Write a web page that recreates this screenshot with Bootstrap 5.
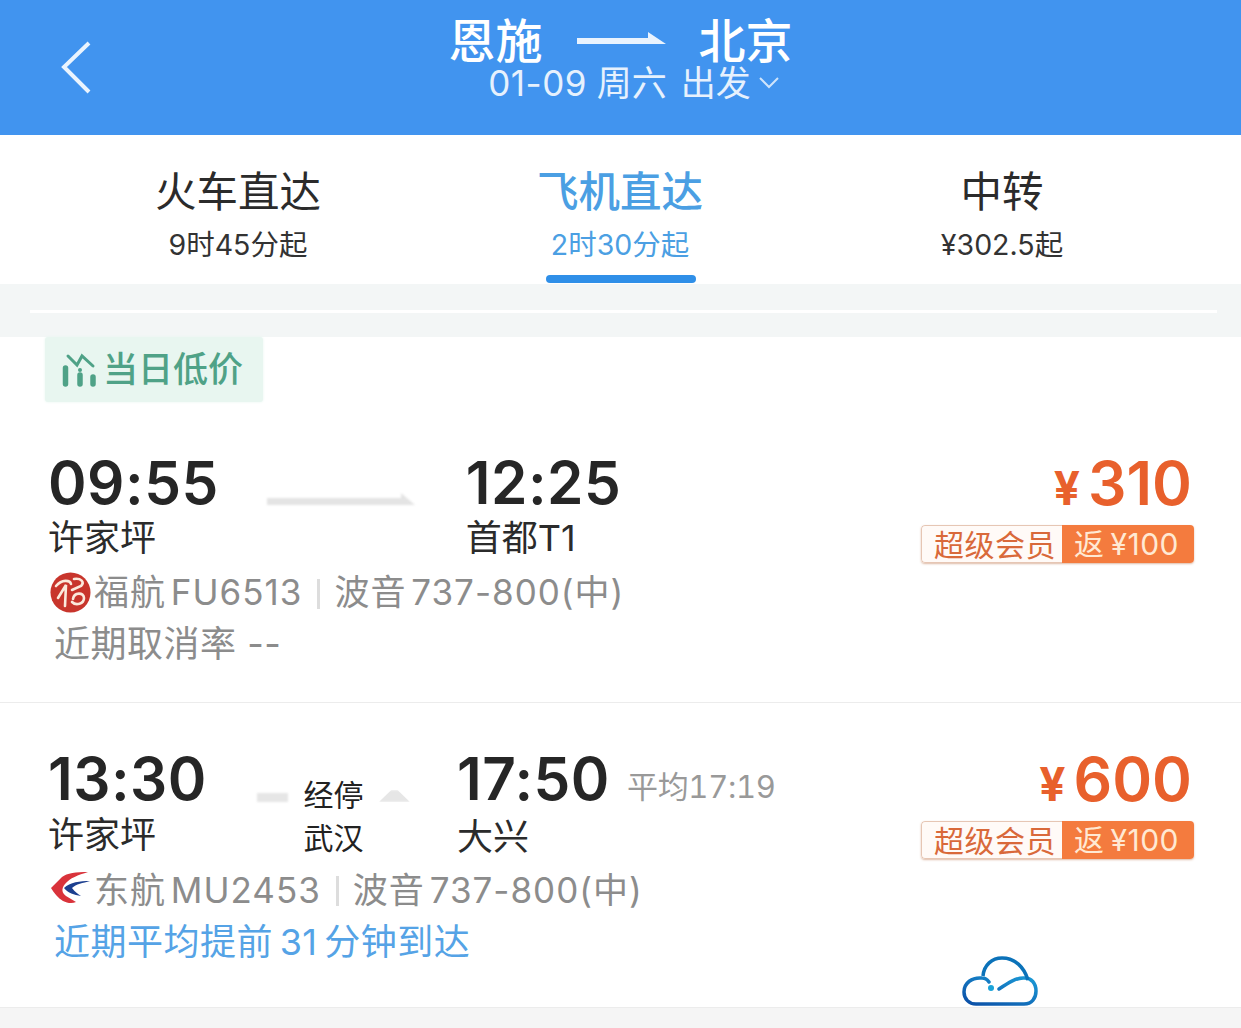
<!DOCTYPE html>
<html lang="zh-CN">
<head>
  <meta charset="UTF-8">
  <title>恩施 - 北京</title>
  <meta name="viewport" content="width=device-width, initial-scale=1">
  <link href="https://cdn.jsdelivr.net/npm/bootstrap@5.3.0/dist/css/bootstrap.min.css" rel="stylesheet">
  <style>
    body {
      background: #fff;
      font-family: "Inter", "Noto Sans CJK SC", sans-serif;
      color: #222;
      overflow: hidden;
    }
    .top-bar { height: 135px; background: #4194ef; color: #fff; }
    .back-icon { left: 60px; top: 41px; }
    .route-line { height: 66px; padding-top: 16px; font-size: 47px; font-weight: 500; line-height: 50px; gap: 33px; }
    .route-arrow { margin-top: 13px; margin-right: -2px; }
    .route-date { font-size: 35px; line-height: 34px; color: #e6f1fd; padding-left: 26px; }
    .route-date .digits { letter-spacing: .5px; }
    .route-date .day-text { margin-right: 4px; }
    .tab-row { height: 149px; padding: 0 47px; }
    .tab-item { width: 382px; padding-top: 30px; color: #2b2b2b; }
    .tab-title { font-size: 41.500px; line-height: 54px; }
    .tab-sub { font-size: 28.500px; line-height: 36px; margin-top: 8px; color: #333; }
    .tab-on, .tab-on .tab-sub { color: #4b9fe3; }
    .tab-on .tab-title { font-weight: 500; }
    .tab-mark { left: 50%; margin-left: -74px; bottom: 1px; width: 150px; height: 8px; border-radius: 4px; background: #2f8fe8; }
    .gap-band { height: 53px; background: #f3f6f6; padding: 26px 24px 0 30px; }
    .gap-line { height: 3px; background: #fff; }
    .low-tag { margin-left: 45px; width: 218px; height: 65px; background: #e8f6f0; color: #4fa287; font-size: 35px; font-weight: 500; border-radius: 3px; padding-left: 17px; gap: 5px; box-shadow: 0 0 3px #e8f6f0; }
    .flight-row { height: 301px; padding: 51px 47px 0 48px; border-bottom: 1px solid #ececec; }
    .flight-last { height: 305px; padding-top: 46px; }
    .flight-last .air-text { line-height: 53px; margin-bottom: 0; }
    .time-text { font-size: 58.500px; font-weight: 600; line-height: 60px; color: #262626; letter-spacing: .5px; }
    .air-text { font-size: 36px; line-height: 51px; margin-bottom: 2px; color: #2b2b2b; }
    .mid-col { width: 150px; margin: 0 51px 0 46px; height: 60px; }
    .mid-arrow { display: block; margin-top: 39px; filter: blur(1px); }
    .stop-col { width: 153px; margin: 0 47px 0 50px; height: 100px; }
    .stop-text { font-size: 30px; line-height: 43px; margin-top: 25px; }
    .stop-stub { width: 31px; height: 9px; background: #e6e6e6; margin-top: 44px; filter: blur(1px); }
    .stub-hat { height: 12px; margin-top: 41px; clip-path: polygon(0 100%, 40% 0, 60% 0, 100% 100%); }
    .avg-text { font-size: 31px; color: #999; margin-left: 17px; padding-top: 15px; letter-spacing: -.3px; font-variant-numeric: tabular-nums; }
    .info-line { font-size: 35px; line-height: 52px; color: #8c8c8c; gap: 3px; letter-spacing: 1px; word-spacing: -6px; padding-left: 2px; }
    .info-sep { width: 3px; height: 30px; background: #ddd; margin: 3px 11px 0 12px; }
    .info-note { font-size: 36px; line-height: 52px; color: #8c8c8c; padding-left: 6px; letter-spacing: .5px; word-spacing: -4px; }
    .info-plain { word-spacing: 0; }
    .info-blue { color: #55a3e6; }
    .price-text { font-size: 60.500px; font-weight: 600; line-height: 60px; color: #e8602c; margin-right: 2px; }
    .price-yen { font-size: 46px; margin-right: 8px; font-weight: 700; }
    .vip-tag { height: 38px; margin-top: 7px; font-size: 30px; line-height: 38px; border-radius: 4px; box-shadow: 0 1px 2px rgba(190, 120, 80, .5); overflow: hidden; }
    .vip-left { width: 141px; padding-left: 6px; text-align: center; color: #d9693a; background: #fffaf7; border: 1px solid #e6c6b4; border-right: 0; border-radius: 4px 0 0 4px; letter-spacing: .5px; }
    .vip-right { width: 132px; padding-right: 3px; text-align: center; color: #ffe9d3; background: #f47b3e; word-spacing: -3px; letter-spacing: .5px; }
    .cloud-icon { left: 962px; top: 955px; }
    .foot-band { height: 20px; background: #f5f5f5; }
  </style>
</head>
<body>

<!-- header -->
<div class="top-bar position-relative text-center">
  <svg class="back-icon position-absolute" width="32" height="54" viewBox="0 0 32 54" fill="none" stroke="#eaf4fe" stroke-width="4">
    <path d="M29 2 L4 26 L29 51"/>
  </svg>
  <div class="route-line d-flex justify-content-center">
    <span>恩施</span>
    <svg class="route-arrow" width="92" height="24" viewBox="0 0 92 24"><path d="M1 9 H72 L72 3 L90 15 H1 Z" fill="#e9f3fe"/></svg>
    <span>北京</span>
  </div>
  <div class="route-date d-flex justify-content-center align-items-center gap-2">
    <span><span class="digits">01-09</span> <span class="day-text">周六</span> 出发</span>
    <svg width="20" height="12" viewBox="0 0 20 12" fill="none" stroke="#cfe4fb" stroke-width="2"><path d="M1 1 L10 10 L19 1"/></svg>
  </div>
</div>

<!-- tabs -->
<div class="tab-row d-flex">
  <div class="tab-item text-center">
    <div class="tab-title">火车直达</div>
    <div class="tab-sub">9时45分起</div>
  </div>
  <div class="tab-item tab-on text-center position-relative">
    <div class="tab-title">飞机直达</div>
    <div class="tab-sub">2时30分起</div>
    <div class="tab-mark position-absolute"></div>
  </div>
  <div class="tab-item text-center">
    <div class="tab-title">中转</div>
    <div class="tab-sub">¥302.5起</div>
  </div>
</div>

<div class="gap-band"><div class="gap-line"></div></div>

<div class="low-tag d-flex align-items-center">
  <svg width="36" height="34" viewBox="0 0 36 34" fill="none" stroke="#4fa287" stroke-linecap="round">
    <path d="M6 3 L15 12 L20 3 L31 13" stroke-width="3"/>
    <path d="M3.500 15 V31 M18 22 V31 M31 24 V31" stroke-width="5.500"/>
    <path d="M18 17 V17.100" stroke-width="4"/>
  </svg>
  <span>当日低价</span>
</div>

<!-- flight 1 -->
<div class="flight-row d-flex justify-content-between">
  <div>
    <div class="d-flex">
      <div>
        <div class="time-text">09:55</div>
        <div class="air-text">许家坪</div>
      </div>
      <div class="mid-col">
        <svg class="mid-arrow" width="150" height="14" viewBox="0 0 150 14"><path d="M2 6 H136 V1 L150 13 H2 Z" fill="#e4e4e4"/></svg>
      </div>
      <div>
        <div class="time-text">12:25</div>
        <div class="air-text">首都T1</div>
      </div>
    </div>
    <div class="info-line d-flex align-items-center">
      <svg width="41" height="41" viewBox="0 0 41 41" fill="none">
        <circle cx="20.500" cy="20.500" r="20" fill="#c8352c"/>
        <path d="M6 14 C12 7 20 8 21 12 M8 26 L16 13 L15 34 M24 7 C31 6 35 10 31 14 L22 18 M23 27 C24 20 34 20 34 26 C34 32 26 34 22 30" stroke="#fbe9dc" stroke-width="2.600" stroke-linecap="round"/>
      </svg>
      <span>福航 FU6513</span><span class="info-sep"></span><span>波音 737-800(中)</span>
    </div>
    <div class="info-note info-plain">近期取消率 --</div>
  </div>
  <div class="d-flex flex-column align-items-end">
    <div class="price-text"><span class="price-yen">¥</span>310</div>
    <div class="vip-tag d-flex">
      <div class="vip-left">超级会员</div>
      <div class="vip-right">返 ¥100</div>
    </div>
  </div>
</div>

<!-- flight 2 -->
<div class="flight-row flight-last d-flex justify-content-between position-relative">
  <div>
    <div class="d-flex">
      <div>
        <div class="time-text">13:30</div>
        <div class="air-text">许家坪</div>
      </div>
      <div class="stop-col d-flex justify-content-between">
        <div class="stop-stub"></div>
        <div class="stop-text">经停<br>武汉</div>
        <div class="stop-stub stub-hat"></div>
      </div>
      <div>
        <div class="d-flex">
          <div class="time-text">17:50</div>
          <div class="avg-text">平均17:19</div>
        </div>
        <div class="air-text">大兴</div>
      </div>
    </div>
    <div class="info-line d-flex align-items-center">
      <svg width="41" height="41" viewBox="0 0 41 41">
        <path d="M1 19 L12 8 C17 4 26 3 38 3 C28 6 20 9 15 15 C11 20 12 24 16 27 L26 33 C22 35 17 34 13 32 C8 29 4 24 1 19 Z" fill="#d9333b"/>
        <path d="M14 19 C20 13 30 12 40 12 C33 14 26 15 22 19 C25 23 28 25 31 27 C24 26 18 24 14 19 Z" fill="#1c3f8f"/>
      </svg>
      <span>东航 MU2453</span><span class="info-sep"></span><span>波音 737-800(中)</span>
    </div>
    <div class="info-note info-blue">近期平均提前 31 分钟到达</div>
  </div>
  <div class="d-flex flex-column align-items-end">
    <div class="price-text"><span class="price-yen">¥</span>600</div>
    <div class="vip-tag d-flex">
      <div class="vip-left">超级会员</div>
      <div class="vip-right">返 ¥100</div>
    </div>
  </div>
</div>

<div class="foot-band"></div>

<!-- watermark -->
<svg class="cloud-icon position-absolute" width="76" height="52" viewBox="0 0 76 52" fill="none">
  <defs>
    <linearGradient id="cloudLine" x1="0" y1="1" x2="1" y2="0">
      <stop offset="0" stop-color="#0b4ea6"/>
      <stop offset="1" stop-color="#1b9ad6"/>
    </linearGradient>
  </defs>
  <path d="M27 27 C25 24 23 23 20 23 C10 22 2 28 2 37 C2 44 7 49 14 49 H62 C70 49 74 43 74 36 C74 28 69 23 63 23 C55 22 46 28 37 34" stroke="url(#cloudLine)" stroke-width="3.500" stroke-linecap="round"/>
  <path d="M21 21 C22 10 30 3 40 3 C53 3 62 12 66 25" stroke="#0b72b9" stroke-width="3.500"/>
  <circle cx="29" cy="33" r="3" fill="#1aa3d8"/>
</svg>

<script src="https://cdn.jsdelivr.net/npm/bootstrap@5.3.0/dist/js/bootstrap.bundle.min.js"></script>
</body>
</html>
